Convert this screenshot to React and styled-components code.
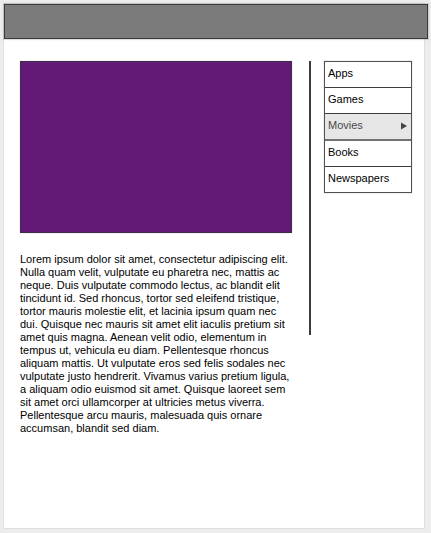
import React from "react";
import styled, { createGlobalStyle } from "styled-components";

const GlobalStyle = createGlobalStyle`
  *, *::before, *::after { box-sizing: border-box; }
  body {
    margin: 0;
    background: #ededed;
    color: #000;
    font-family: "Liberation Sans", Arial, sans-serif;
    font-size: 11px;
  }
`;

const Page = styled.div`
  min-height: calc(100vh - 7px);
  margin: 3px 6px 3px 3px;
  border: 1px solid #dedede;
  background: #fff;
`;

const Header = styled.header`
  height: 35px;
  margin-right: -4px;
  border: 1px solid #3a3a3a;
  background: #7b7b7b;
  box-shadow: 0 0 1px 1px rgba(0, 0, 0, 0.13);
`;

const Content = styled.div`
  display: flex;
  align-items: flex-start;
  padding: 22px 12px 0 16px;
`;

const Article = styled.main`
  flex: 1;
  min-width: 0;
`;

const Hero = styled.div`
  height: 172px;
  border: 1px solid #402d4b;
  background: #631976;
  box-shadow: 0 0 1px rgba(0, 0, 0, 0.3);
`;

const Paragraph = styled.p`
  margin: 20px 0 0;
  line-height: 13px;
`;

const Divider = styled.div`
  width: 2px;
  height: 274px;
  margin: 0 13px 0 17px;
  background: #3c3c3e;
`;

const Menu = styled.nav`
  width: 88px;
  border: 1px solid #505052;
  box-shadow: 0 0 1px rgba(0, 0, 0, 0.3);
`;

const MenuLink = styled.a`
  display: flex;
  align-items: center;
  justify-content: space-between;
  box-sizing: content-box;
  height: 23px;
  padding: 0 4px 2px 3px;
  line-height: 13px;
  border-bottom: ${({ $active }) => ($active ? "2px solid #727274" : "1px solid #3c3c3e")};
  color: ${({ $active }) => ($active ? "#4a4a4a" : "#000")};
  background: ${({ $active }) => ($active ? "#e6e6e6" : "#fff")};
  text-decoration: none;

  &:last-child {
    border-bottom: 0;
  }
`;

const Arrow = () => (
  <svg width="6" height="8" viewBox="0 0 6 8" aria-hidden="true">
    <path d="M0 0.5 L6 4 L0 7.5 Z" fill="#444" />
  </svg>
);

const items = ["Apps", "Games", "Movies", "Books", "Newspapers"];

export default function App() {
  return (
    <>
      <GlobalStyle />
      <Page>
        <Header />
        <Content>
          <Article>
            <Hero />
            <Paragraph>
              Lorem ipsum dolor sit amet, consectetur adipiscing elit. Nulla quam
              velit, vulputate eu pharetra nec, mattis ac neque. Duis vulputate
              commodo lectus, ac blandit elit tincidunt id. Sed rhoncus, tortor
              sed eleifend tristique, tortor mauris molestie elit, et lacinia
              ipsum quam nec dui. Quisque nec mauris sit amet elit iaculis
              pretium sit amet quis magna. Aenean velit odio, elementum in tempus
              ut, vehicula eu diam. Pellentesque rhoncus aliquam mattis. Ut
              vulputate eros sed felis sodales nec vulputate justo hendrerit.
              Vivamus varius pretium ligula, a aliquam odio euismod sit amet.
              Quisque laoreet sem sit amet orci ullamcorper at ultricies metus
              viverra. Pellentesque arcu mauris, malesuada quis ornare accumsan,
              blandit sed diam.
            </Paragraph>
          </Article>
          <Divider />
          <Menu aria-label="Categories">
            {items.map((item) => {
              const active = item === "Movies";
              return (
                <MenuLink
                  key={item}
                  href="#"
                  $active={active}
                  aria-current={active ? "page" : undefined}
                >
                  {item}
                  {active && <Arrow />}
                </MenuLink>
              );
            })}
          </Menu>
        </Content>
      </Page>
    </>
  );
}
